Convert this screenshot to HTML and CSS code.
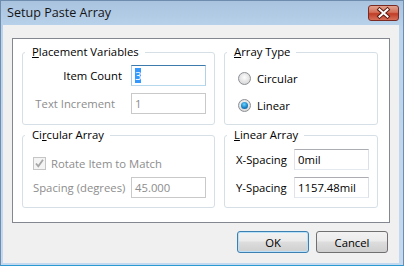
FILE: index.html
```html
<!DOCTYPE html>
<html lang="en">
<head>
    <meta charset="UTF-8">
    <title>Setup Paste Array</title>
    <link rel="stylesheet" href="styles.css">
</head>
<body>

    <!-- Dialog window -->
    <div class="window">
        <div class="titlebar">
            <span class="title">Setup Paste Array</span>
            <div class="close">
                <svg width="31" height="16" viewBox="0 0 31 16">
                    <path d="M11.5 4.5 L19.5 11.5 M19.5 4.5 L11.5 11.5" stroke="#5a1a10" stroke-width="4" stroke-linecap="square"/>
                    <path d="M11.5 4.5 L19.5 11.5 M19.5 4.5 L11.5 11.5" stroke="#ffffff" stroke-width="2" stroke-linecap="square"/>
                </svg>
            </div>
        </div>

        <div class="client">
            <div class="panel">

                <!-- Placement Variables -->
                <fieldset class="group group-placement">
                    <legend><u>P</u>lacement Variables</legend>
                    <div class="row">
                        <span class="lbl lbl-count">Item Count</span>
                        <div class="textbox focused"><span class="sel">3</span></div>
                    </div>
                    <div class="row">
                        <span class="lbl lbl-inc disabled">Text Increment</span>
                        <div class="textbox disabled">1</div>
                    </div>
                </fieldset>

                <!-- Array Type -->
                <fieldset class="group group-type">
                    <legend><u>A</u>rray Type</legend>
                    <div class="opt">
                        <span class="radio"></span>
                        <span>Circular</span>
                    </div>
                    <div class="opt">
                        <span class="radio checked"></span>
                        <span>Linear</span>
                    </div>
                </fieldset>

                <!-- Circular Array -->
                <fieldset class="group group-circular">
                    <legend>Ci<u>r</u>cular Array</legend>
                    <div class="opt check-row disabled">
                        <span class="checkbox">
                            <svg width="11" height="11" viewBox="0 0 11 11">
                                <path d="M2 5.5 L4.3 8.3 L9 1.8" fill="none" stroke="#a6a6a6" stroke-width="1.8"/>
                            </svg>
                        </span>
                        <span>Rotate Item to Match</span>
                    </div>
                    <div class="row">
                        <span class="lbl disabled">Spacing (degrees)</span>
                        <div class="textbox disabled">45.000</div>
                    </div>
                </fieldset>

                <!-- Linear Array -->
                <fieldset class="group group-linear">
                    <legend><u>L</u>inear Array</legend>
                    <div class="row">
                        <span class="lbl">X-Spacing</span>
                        <div class="textbox">0mil</div>
                    </div>
                    <div class="row">
                        <span class="lbl">Y-Spacing</span>
                        <div class="textbox">1157.48mil</div>
                    </div>
                </fieldset>

            </div>

            <div class="buttons">
                <button class="btn btn-default">OK</button>
                <button class="btn">Cancel</button>
            </div>
        </div>
    </div>

</body>
</html>
```

FILE: styles.css
```css
body {
    margin: 0;
    font-family: "Open Sans", "Noto Sans", sans-serif;
    font-size: 11.3px;
    color: #000;
}
.window {
    width: 404px;
    height: 266px;
    box-sizing: border-box;
    display: flex;
    flex-direction: column;
    border: 1px solid #6d8cae;
    border-bottom-color: #2c9ad2;
    background: linear-gradient(to bottom, #a9c3df, #bcd4ec 30px, #c3d9ef);
}
.titlebar {
    height: 24px;
    display: flex;
    align-items: flex-start;
    padding: 0 4px 0 6px;
}
.title {
    font-size: 12.6px;
    line-height: 24px;
    color: #151515;
}
.close {
    margin-left: auto;
    margin-top: 4px;
    width: 31px;
    height: 16px;
    box-sizing: border-box;
    border: 1px solid #7a2a22;
    border-radius: 3px;
    background: linear-gradient(to bottom, #e2a28f, #d3705a 45%, #c03d26 55%, #d7705a);
    display: flex;
}
.close svg {
    margin: -1px;
}
.client {
    flex: 1;
    margin: 0 4px 2px 2px;
    background: #f0f0f0;
}
.panel {
    margin: 13px 0 0 9px;
    width: 378px;
    height: 185px;
    box-sizing: border-box;
    border: 1px solid #828790;
    background: #fff;
    padding: 6px 0 0 9px;
    display: grid;
    grid-template-columns: 193px 154px;
    grid-template-rows: 80px 80px;
    column-gap: 9px;
    row-gap: 3px;
}
.group {
    margin: 0;
    padding: 0;
    border: 1px solid #d5dfe5;
    border-radius: 3px;
    min-width: 0;
    box-sizing: border-box;
    display: flex;
    flex-direction: column;
}
.group legend {
    line-height: 14px;
    padding: 0 6px 0 7px;
    margin-left: 2px;
}
.row {
    display: flex;
    align-items: center;
    height: 21px;
}
.lbl {
    white-space: nowrap;
}
.textbox {
    width: 75px;
    height: 21px;
    box-sizing: border-box;
    border: 1px solid #abadb3;
    border-color: #abadb3 #dbdfe6 #e3e9ef #e2e3ea;
    padding: 0 3px;
    line-height: 19px;
    background: #fff;
}
.textbox.focused {
    border-color: #3d7bad #b5cfe7 #b7d9ed #a4c9e3;
}
.textbox.disabled {
    border-color: #c9c9c9;
    color: #8d8d8d;
}
.sel {
    background: #3399ff;
    color: #fff;
}
.disabled {
    color: #8d8d8d;
}

/* placement */
.group-placement .row:first-of-type {
    margin-top: 6px;
}
.group-placement .row + .row {
    margin-top: 7px;
}
.lbl-count {
    width: 99px;
    margin-right: 9px;
    text-align: right;
}
.lbl-inc {
    width: 92px;
    margin-right: 16px;
    text-align: right;
}

/* array type */
.opt {
    display: flex;
    align-items: center;
    height: 18px;
    gap: 6px;
}
.group-type .opt {
    padding-left: 13px;
}
.group-type .opt:first-of-type {
    margin-top: 10px;
}
.group-type .opt + .opt {
    margin-top: 9px;
}
.radio {
    width: 13px;
    height: 13px;
    box-sizing: border-box;
    border-radius: 50%;
    border: 1px solid #8c8f94;
    background: radial-gradient(circle at 50% 40%, #fdfdfd, #dcdcdc 70%, #c8c8c8);
    display: flex;
    align-items: center;
    justify-content: center;
}
.radio.checked::after {
    content: "";
    width: 7px;
    height: 7px;
    border-radius: 50%;
    background: radial-gradient(circle at 45% 35%, #6ad4ff, #1a82c4 55%, #0b4f85);
}

/* circular */
.group-circular .check-row {
    margin-top: 12px;
    padding-left: 10px;
    gap: 5px;
}
.checkbox {
    width: 13px;
    height: 13px;
    box-sizing: border-box;
    border: 1px solid #c5c5c5;
    background: #f4f4f4;
    display: flex;
    align-items: center;
    justify-content: center;
}
.group-circular .row {
    margin-top: 5px;
}
.group-circular .lbl {
    width: 98px;
    padding-left: 10px;
}

/* linear */
.group-linear .row:first-of-type {
    margin-top: 7px;
}
.group-linear .row + .row {
    margin-top: 7px;
}
.group-linear .lbl {
    width: 58px;
    padding-left: 11px;
}

/* buttons */
.buttons {
    display: flex;
    justify-content: flex-end;
    gap: 7px;
    margin-top: 8px;
    padding-right: 11px;
}
.btn {
    width: 72px;
    height: 22px;
    box-sizing: border-box;
    border: 1px solid #707070;
    border-radius: 3px;
    background: linear-gradient(to bottom, #f2f2f2, #ebebeb 45%, #dddddd 50%, #cfcfcf);
    font-family: inherit;
    font-size: 11.3px;
    padding: 0;
    color: #000;
}
.btn-default {
    border-color: #3c7fb1;
    box-shadow: inset 0 0 0 1px #b9e1f7;
}
```
